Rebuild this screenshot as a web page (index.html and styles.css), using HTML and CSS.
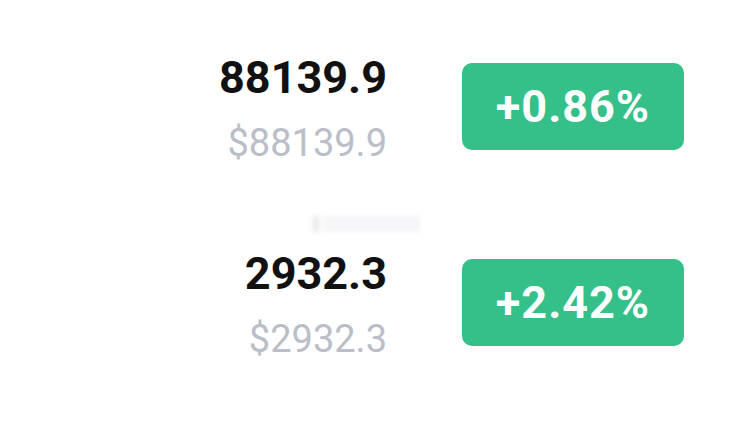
FILE: index.html
```html
<!DOCTYPE html>
<html lang="en">

<head>
  <meta charset="UTF-8" />
  <title>Market</title>
  <link rel="stylesheet" href="styles.css">
</head>

<body>

  <div class="market-list">

    <div class="market-row">
      <div class="price-col">
        <div class="price">88139.9</div>
        <div class="price-usd">$88139.9</div>
      </div>
      <div class="change up">+0.86%</div>
    </div>

    <!-- faint watermark between rows -->
    <div class="watermark">
      <span class="wm-bar wm-short"></span>
      <span class="wm-bar wm-long"></span>
    </div>

    <div class="market-row">
      <div class="price-col">
        <div class="price">2932.3</div>
        <div class="price-usd">$2932.3</div>
      </div>
      <div class="change up">+2.42%</div>
    </div>

  </div>

</body>

</html>
```

FILE: styles.css
```css
body {
  margin: 0;
  background: white;
  font-family: Roboto, 'Noto Sans', sans-serif;
}

.market-list {
  padding: 63px 49px 0 0;
}

.market-row {
  display: flex;
  justify-content: flex-end;
  align-items: flex-start;
  gap: 75px;
}

.price-col {
  text-align: right;
}

.price {
  font-size: 45px;
  font-weight: bold;
  color: #111;
  line-height: 40px;
  margin-top: -5px;
}

.price-usd {
  font-size: 38px;
  color: #babec8;
  line-height: 40px;
  margin-top: 25px;
}

.change {
  width: 222px;
  height: 87px;
  border-radius: 10px;
  color: white;
  font-size: 45px;
  letter-spacing: 1px;
  font-weight: bold;
  display: flex;
  align-items: center;
  justify-content: center;
}

.change.up {
  background-color: #35bf89;
}

.watermark {
  display: flex;
  justify-content: flex-end;
  align-items: flex-end;
  gap: 4px;
  height: 69px;
  padding: 0 264px 27px 0;
}

.wm-bar {
  height: 16px;
  background: #eeeef0;
  filter: blur(2px);
}

.wm-short {
  width: 8px;
}

.wm-long {
  width: 96px;
  background: #f5f5f7;
}
```
